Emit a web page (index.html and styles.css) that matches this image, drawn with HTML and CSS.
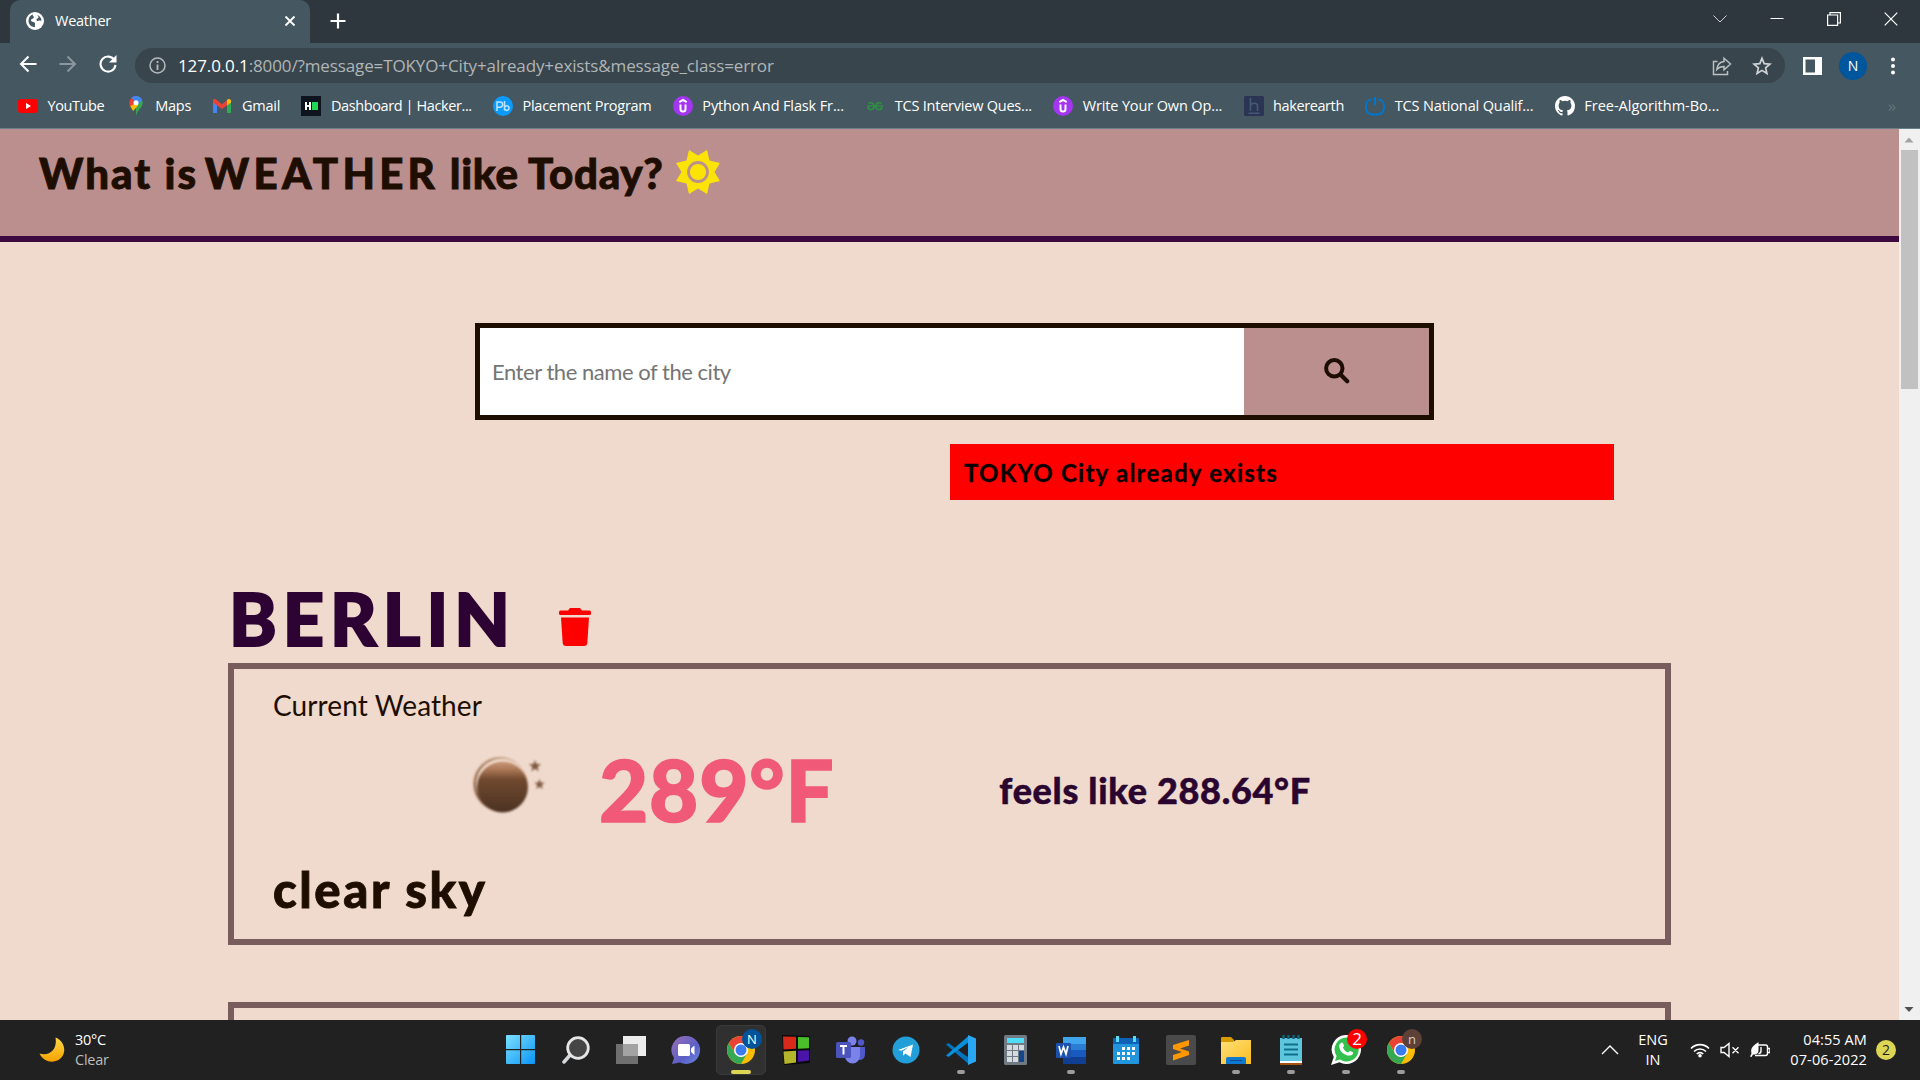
FILE: index.html
```html
<!DOCTYPE html>
<html lang="en">
<head>
<meta charset="utf-8">
<title>Weather</title>
<link rel="stylesheet" href="styles.css">
</head>
<body>
<svg width="0" height="0" class="defs">
  <defs>
    <linearGradient id="night" x1="0" y1="0" x2="0" y2="1"><stop offset="0" stop-color="#c9987a"/><stop offset=".14" stop-color="#b07c5a"/><stop offset=".35" stop-color="#70492f"/><stop offset="1" stop-color="#4c3222"/></linearGradient>
    <linearGradient id="win" x1="0" y1="0" x2="1" y2="1"><stop offset="0" stop-color="#7ce0ff"/><stop offset="1" stop-color="#0a95f5"/></linearGradient>
    <linearGradient id="chat" x1="0" y1="0" x2="1" y2="1"><stop offset="0" stop-color="#9a6fb5"/><stop offset=".6" stop-color="#5b5fc7"/><stop offset="1" stop-color="#6b8bdf"/></linearGradient>
    <linearGradient id="folder" x1="0" y1="0" x2="1" y2="1"><stop offset="0" stop-color="#ffe07a"/><stop offset="1" stop-color="#f9bd1f"/></linearGradient>
    <linearGradient id="moon" x1="0" y1="0" x2="0" y2="1"><stop offset="0" stop-color="#ffd84a"/><stop offset="1" stop-color="#f6a200"/></linearGradient>
    <symbol id="chrome" viewBox="0 0 28 28">
      <circle cx="14" cy="14" r="14" fill="#fbbc04"/>
      <path d="M14 7h12.100A14 14 0 0 0 1.900 7L8 17z" fill="#ea4335"/>
      <path d="M1.900 7 8 17.500 14 21l6-3.500L14 28A14 14 0 0 1 1.900 7z" fill="#34a853"/>
      <circle cx="14" cy="14" r="7" fill="#fff"/><circle cx="14" cy="14" r="5.500" fill="#3a7cf0"/>
    </symbol>
    <symbol id="udemy" viewBox="0 0 20 20"><circle cx="10" cy="10" r="10" fill="#a435f0"/><path d="M6.300 6.200 10 4l3.700 2.200M7.500 8.500v4.500a2.500 2.500 0 0 0 5 0V8.500" fill="none" stroke="#fff" stroke-width="2"/></symbol>
  </defs>
</svg>

<div class="tabs">
  <div class="tab">
    <svg width="18" height="18" viewBox="0 0 18 18"><circle cx="9" cy="9" r="9" fill="#fff"/><path d="M7 2.200c-1 1.500 1.200 1.800.8 3.300S4.500 6.700 5 8.500s3 1 3.800 2.300-.4 2.500.2 4.200c-4 0-6.500-3-6.500-6.300C2.500 5.500 4.500 3 7 2.200zM11.500 3c2.300 1 3.800 3 4 5.500-1 .8-2-.4-3 .3s-2-.3-2-1.400 2-1 2-2.200-1-1-1-2.200z" fill="#455760"/></svg>
    <span class="tab-title">Weather</span>
    <svg width="12" height="12" viewBox="0 0 12 12" class="tab-close"><path d="M1.500 1.500l9 9M10.500 1.500l-9 9" stroke="#fff" stroke-width="1.800"/></svg>
  </div>
  <svg class="new-tab" width="16" height="16" viewBox="0 0 16 16"><path d="M8 .5v15M.5 8h15" stroke="#fff" stroke-width="2.200"/></svg>
  <div class="window-buttons">
    <svg width="14" height="14" viewBox="0 0 14 14"><path d="M.5 3.500 7 10l6.500-6.500" fill="none" stroke="#cdd1d3"/></svg>
    <svg width="14" height="14" viewBox="0 0 14 14"><path d="M.5 6.500h13" stroke="#fff"/></svg>
    <svg width="14" height="14" viewBox="0 0 14 14"><path d="M.6 3h10v10.400H.6zM3 3V.6h10.400v10.400H11" fill="none" stroke="#fff" stroke-width="1.200"/></svg>
    <svg width="14" height="14" viewBox="0 0 14 14"><path d="M.7.7l12.600 12.600M13.300.7.7 13.300" stroke="#fff" stroke-width="1.200"/></svg>
  </div>
</div>

<div class="toolbar">
  <div class="nav">
    <svg width="18" height="18" viewBox="0 0 18 18"><path d="M17.500 9H2M9.500 1.500 2 9l7.500 7.500" fill="none" stroke="#fff" stroke-width="2"/></svg>
    <svg width="18" height="18" viewBox="0 0 18 18"><path d="M.5 9H16M8.500 1.500 16 9l-7.500 7.500" fill="none" stroke="#8b979d" stroke-width="2"/></svg>
    <svg width="18" height="18" viewBox="0 0 18 18"><path d="M15.500 5.200A7.500 7.500 0 1 0 16.500 10" fill="none" stroke="#fff" stroke-width="2.100"/><path d="M17.500 0v7.500H10z" fill="#fff"/></svg>
  </div>
  <div class="address">
    <svg width="17" height="17" viewBox="0 0 17 17"><circle cx="8.500" cy="8.500" r="7.500" fill="none" stroke="#b4babd" stroke-width="1.500"/><path d="M8.500 7.500V13M8.500 4v2" stroke="#b4babd" stroke-width="1.800"/></svg>
    <span class="url"><b>127.0.0.1</b>:8000/?message=TOKYO+City+already+exists&amp;message_class=error</span>
    <svg width="20" height="20" viewBox="0 0 20 20" class="share"><path d="M5.500 5.500h-4v13h14v-3.500" fill="none" stroke="#b9bfc2" stroke-width="1.500"/><path d="M12 2.200 18.500 8 12 13.800v-3.300c-3.500 0-5.500 1-7.200 3C5.300 9 8 6 12 5.500z" fill="none" stroke="#b9bfc2" stroke-width="1.500"/></svg>
    <svg width="20" height="20" viewBox="0 0 20 20"><path d="M10 2.300l2.200 5.300 5.700.5-4.300 3.700 1.300 5.600-4.900-3-4.900 3 1.300-5.600L2.100 8.100l5.700-.5z" fill="none" stroke="#d0d4d6" stroke-width="1.700"/></svg>
  </div>
  <svg width="19" height="18" viewBox="0 0 19 18" class="panel"><path d="M0 0h19v18H0zM2.500 2.500v13H12v-13z" fill="#fff" fill-rule="evenodd"/></svg>
  <span class="avatar">N</span>
  <svg width="6" height="18" viewBox="0 0 6 18"><circle cx="3" cy="2.500" r="2" fill="#fff"/><circle cx="3" cy="9" r="2" fill="#fff"/><circle cx="3" cy="15.500" r="2" fill="#fff"/></svg>
</div>

<div class="bookmarks">
  <a><svg width="20" height="20" viewBox="0 0 20 20"><rect y="3" width="20" height="14" rx="3" fill="#f00"/><path d="M8 7l5 3-5 3z" fill="#fff"/></svg>YouTube</a>
  <a><svg width="20" height="20" viewBox="0 0 20 20"><path d="M10 0a6.700 6.700 0 0 1 6.700 6.700c0 5-5.500 7-6.700 13.300z" fill="#34a853"/><path d="M10 0a6.700 6.700 0 0 0-6.700 6.700c0 2 1 3.700 2.300 5.300L10 6.700z" fill="#ea4335"/><path d="M4.300 10l5.700-3 2.500 2L7.200 15C6 13 5 12 4.300 10z" fill="#fbbc04"/><path d="M5.500 1.800A6.700 6.700 0 0 1 16.200 4L12 8.500 8 4.500z" fill="#4285f4"/><circle cx="10" cy="6.700" r="2.500" fill="#fff"/></svg>Maps</a>
  <a><svg width="20" height="20" viewBox="0 0 20 20"><path d="M1 5v12h4V8z" fill="#4285f4"/><path d="M19 5v12h-4V8z" fill="#34a853"/><path d="M1 4.500C1 3 3 2.500 4 3.500l6 4.800 6-4.800V8.500L10 13 1 6.500z" fill="#ea4335"/><path d="M15 4l1-.7c1.200-.8 3 0 3 1.700v1.500l-4 3z" fill="#fbbc04"/></svg>Gmail</a>
  <a><svg width="20" height="20" viewBox="0 0 20 20"><path d="M0 0h20v20H0z" fill="#0e141e"/><path d="M4 6h2v3h2V6h2v8H8v-3H6v3H4z" fill="#fff"/><path d="M11 6h6v8h-6z" fill="#1fd655"/></svg>Dashboard | Hacker...</a>
  <a><svg width="20" height="20" viewBox="0 0 20 20"><circle cx="10" cy="10" r="10" fill="#0b9bff"/><path d="M4 15V6h3a2.300 2.300 0 0 1 0 5.200H4M11.500 5v9.500M11.500 12a2.300 2.300 0 1 1 0 .1" fill="none" stroke="#bfe5ff" stroke-width="1.500"/></svg>Placement Program</a>
  <a><svg width="20" height="20"><use href="#udemy"/></svg>Python And Flask Fr...</a>
  <a><svg width="20" height="20" viewBox="0 0 20 20"><path d="M2 10h16M3.500 7.500c3-2 5.500 0 5.500 2.500a3 3 0 0 1-6 1M16.500 7.500c-3-2-5.500 0-5.500 2.500a3 3 0 0 0 6 1" fill="none" stroke="#2f8d46" stroke-width="1.700"/></svg>TCS Interview Ques...</a>
  <a><svg width="20" height="20"><use href="#udemy"/></svg>Write Your Own Op...</a>
  <a><svg width="20" height="20" viewBox="0 0 20 20"><rect width="20" height="20" rx="1.500" fill="#2c3454"/><path d="M6.500 2v13M6.500 9.500c1-3 7-3 7 .5v5M4.500 17.200h11" fill="none" stroke="#455978" stroke-width="1.600"/></svg>hakerearth</a>
  <a><svg width="20" height="20" viewBox="0 0 20 20"><path d="M6.500 3.500C2.500 4 1 5.500 1 10.500c0 6 2 8 9 8s9-2 9-8c0-5-1.500-6.500-5.500-7" fill="none" stroke="#0076ce" stroke-width="2"/><path d="M10 1v8" stroke="#0076ce" stroke-width="2.200"/></svg>TCS National Qualif...</a>
  <a><svg width="20" height="20" viewBox="0 0 16 16"><path fill="#fff" d="M8 0C3.580 0 0 3.580 0 8c0 3.540 2.290 6.530 5.470 7.590.4.070.55-.17.55-.38 0-.19-.01-.82-.01-1.490-2.010.37-2.530-.49-2.690-.94-.09-.23-.48-.94-.82-1.130-.28-.15-.68-.52-.01-.53.63-.01 1.080.58 1.230.82.72 1.210 1.870.87 2.330.66.070-.52.28-.87.51-1.070-1.780-.2-3.640-.89-3.640-3.950 0-.87.31-1.590.82-2.150-.08-.2-.36-1.020.08-2.120 0 0 .67-.21 2.200.82a7.600 7.600 0 0 1 4 0c1.530-1.040 2.200-.82 2.200-.82.44 1.100.16 1.920.08 2.120.51.56.82 1.270.82 2.150 0 3.070-1.870 3.750-3.650 3.950.29.25.54.73.54 1.480 0 1.070-.01 1.930-.01 2.200 0 .21.15.46.55.38A8 8 0 0 0 16 8c0-4.420-3.580-8-8-8z"/></svg>Free-Algorithm-Bo...</a>
  <span class="more">»</span>
</div>

<div class="viewport">
  <main class="page">
    <header class="banner">
      <h1><span class="lead">What is</span> <span class="loud">WEATHER</span> like Today?</h1>
      <svg width="44" height="44" viewBox="0 0 44 44"><path d="M13 0l9 5.500L31 0l2.500 10.500L44 13l-5.500 9L44 31l-10.500 2.500L31 44l-9-5.500L13 44l-2.500-10.500L0 31l5.500-9L0 13l10.500-2.500z" fill="#fbe307"/><circle cx="22" cy="22" r="9.500" fill="#fbe307" stroke="#bc8f8f" stroke-width="2.800"/></svg>
    </header>
    <form class="search">
      <span class="field">Enter the name of the city</span>
      <span class="go"><svg width="26" height="26" viewBox="0 0 26 26"><circle cx="10.300" cy="10.300" r="8.200" fill="none" stroke="#1e0e02" stroke-width="4"/><path d="M16.500 16.500l6.700 6.700" stroke="#1e0e02" stroke-width="4.200" stroke-linecap="round"/></svg></span>
    </form>
    <p class="alert">TOKYO City already exists</p>
    <div class="city">
      <h2>BERLIN</h2>
      <svg width="32" height="38" viewBox="0 0 32 38"><path d="M1.500 2.500H9L11 0h10l2 2.500h7.500q1.500 0 1.500 1.500v1.700q0 1.300-1.500 1.300h-29Q0 7 0 5.700V4q0-1.500 1.500-1.500zM2 9.500h28L28.300 35q-.2 3-3.300 3H7q-3.100 0-3.300-3z" fill="#f00"/></svg>
    </div>
    <section class="card">
      <p class="label">Current Weather</p>
      <div class="reading">
        <svg class="sky" width="76" height="58" viewBox="0 0 76 58"><circle cx="28" cy="28" r="27" fill="#cfa284"/><circle cx="28.500" cy="28.500" r="26.500" fill="#8a6248"/><circle cx="29.500" cy="28" r="25.500" fill="#f3dfd0"/><circle cx="30.500" cy="31" r="25.500" fill="url(#night)"/><path d="M63 4l1.500 4 4.500.2-3.500 2.800 1.300 4.300-3.800-2.500-3.800 2.500 1.300-4.300L57 8.200l4.500-.2zM67.500 23l1.300 3.500 4 .2-3.100 2.400 1.100 3.900-3.300-2.200-3.300 2.200 1.100-3.900-3.100-2.400 4-.2z" fill="#805941"/></svg>
        <strong class="temp">289°F</strong>
        <span class="feels">feels like 288.64°F</span>
      </div>
      <p class="summary">clear sky</p>
    </section>
    <section class="card next"></section>
  </main>
  <div class="scrollbar">
    <svg width="21" height="21" viewBox="0 0 21 21"><path d="M5.500 13.500h9L10 8.500z" fill="#a3a3a3"/></svg>
    <i class="thumb"></i>
    <svg width="21" height="21" viewBox="0 0 21 21"><path d="M5.500 8h9L10 13z" fill="#505050"/></svg>
  </div>
</div>

<footer class="taskbar">
  <div class="weather">
    <svg width="26" height="26" viewBox="0 0 26 26"><path d="M16.500.5C23 3 27 10 24.500 17 21 26.500 6 28 .5 16.500c11 3 18-5 16-16z" fill="url(#moon)"/></svg>
    <div><span>30°C</span><em>Clear</em></div>
  </div>
  <div class="apps">
    <span><svg width="30" height="30" viewBox="0 0 30 30"><path d="M0 1q0-1 1-1h13v14H0zM15.200 0H28q1 0 1 1v13H15.200zM0 15.200h14V29H1q-1 0-1-1zM15.200 15.200H29V28q0 1-1 1H15.200z" fill="url(#win)"/></svg></span>
    <span><svg width="28" height="28" viewBox="0 0 28 28"><path d="M9 18l-7 8" stroke="#d5d8da" stroke-width="3.500" stroke-linecap="round"/><circle cx="16" cy="12" r="10.300" fill="#454545" stroke="#e4e6e7" stroke-width="2.800"/></svg></span>
    <span><svg width="30" height="28" viewBox="0 0 30 28"><path d="M7 0h23v20H7z" fill="#ececec"/><path d="M0 8h22v20H0z" fill="#6f6f6f"/><path d="M7 8h15v12H7z" fill="#a3a3a3"/></svg></span>
    <span><svg width="30" height="28" viewBox="0 0 30 28"><path d="M15 0a14 14 0 1 1-6 26.600L1 28l2-6A14 14 0 0 1 15 0z" fill="url(#chat)"/><rect x="7" y="8" width="12" height="12" rx="1.500" fill="#fff"/><path d="M20 12.500l3.500-3v9.500L20 16z" fill="#fff"/></svg></span>
    <span class="active"><svg width="28" height="28"><use href="#chrome"/></svg><b class="badge blue">N</b></span>
    <span><svg width="28" height="30" viewBox="0 0 28 30"><path d="M0 0l28 1v27L2 30z" fill="#0a0a0a"/><path d="M1 1.500l13 .3v12L1.500 14.500z" fill="#d8291a"/><path d="M16 2l11 .3v11L16 13.800z" fill="#4abf2b"/><path d="M1.500 16.500l12.500-.7v11.700L2.500 29z" fill="#b5b62c"/><path d="M16 15.700l11-.4v10.200L16 27z" fill="#4b14a8"/></svg></span>
    <span><svg width="30" height="28" viewBox="0 0 30 28"><circle cx="16" cy="5" r="4.500" fill="#7b83eb"/><circle cx="25" cy="6.500" r="3.200" fill="#5059c9"/><path d="M20 11h9v7q0 6-6 6z" fill="#5059c9"/><path d="M9 11h15v9a7.500 7.500 0 0 1-15 0z" fill="#7b83eb"/><rect y="6" width="15" height="16" rx="1.500" fill="#4b53bc"/><path d="M4 10h7M7.500 10v8.500" stroke="#fff" stroke-width="2"/></svg></span>
    <span><svg width="28" height="28" viewBox="0 0 28 28"><circle cx="14" cy="14" r="13.500" fill="#229ed9"/><path d="M6 14 21 8.500l-2.500 12.500-5-3.500-2.500 2.300v-4.300l5.500-4.500-7 3.800z" fill="#fff"/></svg></span>
    <span class="run"><svg width="30" height="30" viewBox="0 0 30 30"><path d="M0 9.500 2.500 8 23 23v6.500z" fill="#0074bd"/><path d="M0 20.500 2.500 22 23 7V.5z" fill="#0a8fdb"/><path d="M22 0l8 3.500v23L22 30z" fill="#2aa7f2"/></svg></span>
    <span><svg width="23" height="30" viewBox="0 0 23 30"><rect width="23" height="30" rx="1.500" fill="#717a83"/><path d="M3 3h17v5H3z" fill="#4fdcf7"/><path d="M3 10h5v5H3zM9 10h5v5H9zM15 10h5v5h-5zM3 16h5v5H3zM9 16h5v5H9zM3 22h5v5H3zM9 22h5v5H9z" fill="#d3dae0"/><path d="M15 16h5v11h-5z" fill="#10468c"/></svg></span>
    <span class="run"><svg width="30" height="28" viewBox="0 0 30 28"><path d="M7 1h23v7H7z" fill="#41a5ee"/><path d="M7 8h23v6H7z" fill="#2b7cd3"/><path d="M7 14h23v7H7z" fill="#185abd"/><path d="M7 21h23v7H7z" fill="#103f91"/><rect y="7" width="15" height="15" rx="1" fill="#1c52ad"/><path d="M3 10l2 8 2.500-7L10 18l2-8" fill="none" stroke="#fff" stroke-width="1.700"/></svg></span>
    <span><svg width="26" height="28" viewBox="0 0 26 28"><path d="M0 2h26v6H0z" fill="#0f62b5"/><path d="M0 8h26v19q0 1-1 1H1q-1 0-1-1z" fill="#2196de"/><path d="M3 0h3v6H3zM20 0h3v6h-3z" fill="#5adcf5"/><path d="M9 11h3v3H9zM14 11h3v3h-3zM19 11h3v3h-3zM4 16h3v3H4zM9 16h3v3H9zM14 16h3v3h-3zM19 16h3v3h-3zM4 21h3v3H4zM9 21h3v3H9zM14 21h3v3h-3z" fill="#fff"/></svg></span>
    <span><svg width="30" height="30" viewBox="0 0 30 30"><rect width="30" height="30" rx="2" fill="#4a4a4a"/><path d="M7 10l16-5v5.500l-9 3 9 3V20L7 25.500V20l9-3-9-3z" fill="#ff9800"/></svg></span>
    <span class="run"><svg width="30" height="28" viewBox="0 0 30 28"><path d="M0 2q0-1 1-1h9l3 3v5H0z" fill="#d99b00"/><path d="M0 6h12l3-2h15v24H0z" fill="url(#folder)"/><path d="M5 28v-5q0-2 2-2h16q2 0 2 2v5z" fill="#0f79d0"/><path d="M9 24.500h12" stroke="#0a4f96"/></svg></span>
    <span class="run"><svg width="24" height="30" viewBox="0 0 24 30"><path d="M1 3h22v23H1z" fill="#5dc6dc"/><path d="M1 26h22v2H1z" fill="#fff"/><path d="M1 28h22v2H1z" fill="#a35312"/><path d="M4.500 0v4M9.500 0v4M14.500 0v4M19.500 0v4" stroke="#0d6178" stroke-width="2.500"/><path d="M5 9.500h14M5 14.500h14M5 19.500h14" stroke="#0f6f8c" stroke-width="1.800"/></svg></span>
    <span class="run"><svg width="30" height="30" viewBox="0 0 30 30"><path d="M15.500 0a14.500 14.500 0 1 1-7 27.200L0 30l2.800-8A14.500 14.500 0 0 1 15.500 0z" fill="#fff"/><path d="M15.500 2.500a12 12 0 1 1-6.500 22l-5 1.500 1.600-5A12 12 0 0 1 15.500 2.500z" fill="#32c14c"/><path d="M10 8c1.500-1 2 0 3 2.500.3 1-1.200 1.500-1 2.200 1 2.300 2.800 4 5 4.800.8 0 1.300-2 2.300-1.500 2.500 1 3.500 1.500 2.500 3-3 4-14 0-13.500-8.500 0-1 .8-2 1.700-2.500z" fill="#fff"/></svg><b class="badge red">2</b></span>
    <span class="run"><svg width="28" height="28"><use href="#chrome"/></svg><b class="badge brown">n</b></span>
  </div>
  <div class="tray">
    <svg width="18" height="10" viewBox="0 0 18 10"><path d="M1 9l8-8 8 8" fill="none" stroke="#fff" stroke-width="1.400"/></svg>
    <div class="lang"><span>ENG</span><span>IN</span></div>
    <svg class="wifi" width="20" height="16" viewBox="0 0 20 16"><path d="M1 6.500a12.500 12.500 0 0 1 18 0M4 9.500a8.500 8.500 0 0 1 12 0M6.800 12a4.500 4.500 0 0 1 6.400 0" fill="none" stroke="#fff" stroke-width="1.600"/><circle cx="10" cy="13.800" r="1.800" fill="#fff"/></svg>
    <svg class="vol" width="20" height="16" viewBox="0 0 20 16"><path d="M1 5.500h3L9 1.500v13l-5-4H1zM12.500 5.200l6 6M18.500 5.200l-6 6" fill="none" stroke="#fff" stroke-width="1.400"/></svg>
    <svg class="bat" width="20" height="16" viewBox="0 0 20 16"><path d="M7 3h8.500q2 0 2 2v6.500q0 2-2 2H5M18 6.500h2v4h-2M11 5v4q0 2.500-2.500 2.500" fill="none" stroke="#fff" stroke-width="1.400"/><path d="M8.500 0v8c0 4-3 5-5.500 4.500L1.500 15 0 14.500l1.500-3C0 5 4 3.500 8.500 0z" fill="#fff"/></svg>
    <div class="clock"><span>04:55 AM</span><span>07-06-2022</span></div>
    <b class="count">2</b>
  </div>
</footer>
</body>
</html>
```
FILE: styles.css
```css
* { box-sizing: border-box; margin: 0; padding: 0; }
body {
  width: 1920px;
  height: 1080px;
  overflow: hidden;
  display: flex;
  flex-direction: column;
  font-family: "Open Sans", "Noto Sans", sans-serif;
  background: #212121;
  color: #fff;
}
svg { display: block; flex: none; }
.defs { position: absolute; }

/* Browser window */
.tabs {
  height: 43px;
  flex: none;
  display: flex;
  background: #2d373d;
  padding-left: 10px;
}
.tab {
  width: 300px;
  display: flex;
  align-items: center;
  padding: 0 14px 2px 16px;
  gap: 11px;
  background: #455760;
  border-radius: 10px 10px 0 0;
}
.tab-title { font-size: 14.5px; letter-spacing: -.25px; }
.tab-close { margin-left: auto; }
.new-tab { margin: 13px 0 0 19.5px; }
.window-buttons { margin-left: auto; display: flex; gap: 43px; padding: 12px 22px 0 0; }

.toolbar {
  height: 45px;
  flex: none;
  display: flex;
  align-items: center;
  background: #455760;
  padding: 0 24px 0 19px;
}
.nav { display: flex; gap: 22px; width: 116px; padding-bottom: 3px; }
.address {
  width: 1650px;
  height: 35px;
  display: flex;
  align-items: center;
  border-radius: 18px;
  background: #39454c;
  padding: 0 13px 0 14px;
}
.url { margin-left: 12px; font-size: 17px; letter-spacing: -.12px; color: #b0b5b8; white-space: nowrap; }
.url b { font-weight: 400; color: #fff; }
.share { margin: 0 20px 0 auto; }
.panel { margin-left: 18px; }
.avatar {
  width: 28px;
  height: 28px;
  border-radius: 50%;
  margin: 0 23px 0 17px;
  background: #00569c;
  text-align: center;
  font-size: 14px;
  line-height: 28px;
}

.bookmarks {
  height: 41px;
  flex: none;
  display: flex;
  align-items: center;
  gap: 21.3px;
  background: #455760;
  border-bottom: 1px solid #6b7f88;
  padding: 0 24px 5px 18px;
  font-size: 14.5px;
  letter-spacing: -.22px;
  white-space: nowrap;
}
.bookmarks a { display: flex; align-items: center; gap: 9.5px; }
.bookmarks a:nth-child(1), .bookmarks a:nth-child(4), .bookmarks a:nth-child(9) { letter-spacing: -.4px; }
.bookmarks a:nth-child(5) { letter-spacing: -.27px; }
.bookmarks a:nth-child(6), .bookmarks a:nth-child(8), .bookmarks a:nth-child(10) { letter-spacing: -.13px; }
.bookmarks a:nth-child(11) { letter-spacing: 0; }
.more { margin-left: auto; color: #66727a; font-size: 17px; line-height: 20px; }

/* Weather page */
.viewport { height: 891px; flex: none; display: flex; overflow: hidden; }
.page {
  width: 1899px;
  flex: none;
  background: #efdacd;
  color: #1e0e02;
  font-family: Lato, "Open Sans", sans-serif;
  white-space: nowrap;
}
.banner {
  height: 113px;
  display: flex;
  gap: 12px;
  padding: 17px 39px 0;
  background: #bc8f8f;
  border-bottom: 6px solid #3d0a3f;
}
.banner h1 {
  margin-top: 1px;
  font-size: 42px;
  line-height: 53px;
  font-weight: 900;
  letter-spacing: .7px;
  -webkit-text-stroke: .9px currentColor;
}
.lead { letter-spacing: 2.1px; }
.loud { margin-left: -4px; letter-spacing: 4.3px; }
.banner svg { margin-top: 4px; }
.search {
  width: 959px;
  height: 97px;
  display: flex;
  margin: 81px 0 0 475px;
  border: 5px solid #1e0e02;
  background: #fff;
}
.field { flex: 1; display: flex; align-items: center; padding-left: 12px; font-size: 22px; letter-spacing: -.46px; color: #757575; }
.go { width: 185px; display: grid; place-items: center; padding-bottom: 2px; background: #bc8f8f; }
.alert {
  width: 664px;
  height: 56px;
  margin: 24px 0 0 950px;
  padding-left: 14px;
  background: #f00;
  color: #0a0000;
  font-size: 24px;
  letter-spacing: 1.25px;
  line-height: 57px;
  font-weight: 700;
  -webkit-text-stroke: .3px currentColor;
}
.city { display: flex; align-items: flex-end; gap: 43px; margin: 78px 0 0 228px; padding-left: 1px; }
.city h2 {
  font-size: 72px;
  line-height: 80px;
  font-weight: 900;
  letter-spacing: 6px;
  color: #2d0333;
  -webkit-text-stroke: 2px currentColor;
}
.city svg { margin-bottom: 12px; }
.card {
  width: 1443px;
  height: 282px;
  margin: 5px 0 0 228px;
  padding: 16px 39px 0;
  border: 6px solid #795c5c;
}
.card.next { margin-top: 57px; }
.label { font-size: 28px; line-height: 40px; letter-spacing: .1px; }
.reading { height: 80px; display: flex; align-items: center; margin-top: 24px; padding-left: 199px; }
.sky { margin-top: -8px; filter: blur(.8px); }
.temp { margin-left: 51px; font-size: 85px; font-weight: 900; letter-spacing: .8px; color: #f05a78; -webkit-text-stroke: 1.5px currentColor; }
.feels { margin: 2px 0 0 165px; font-size: 36px; font-weight: 900; letter-spacing: .7px; color: #2a0530; -webkit-text-stroke: .5px currentColor; }
.summary { margin-top: 30px; font-size: 49px; line-height: 60px; font-weight: 900; letter-spacing: 2.6px; -webkit-text-stroke: .9px currentColor; }

.scrollbar { width: 21px; display: flex; flex-direction: column; background: #f0f0f0; }
.thumb { height: 239px; margin: 0 2px auto; background: #c1c1c1; }

/* Taskbar */
.taskbar { height: 60px; flex: none; display: flex; background: #212121; }
.weather { width: 493px; display: flex; align-items: center; gap: 10px; padding: 0 0 0 39px; font-size: 14.5px; letter-spacing: -.25px; line-height: 20px; }
.weather span, .weather em { display: block; }
.weather em { font-style: normal; color: #bdbdbd; }
.apps { display: flex; }
.apps > span { position: relative; width: 55px; height: 60px; display: grid; place-items: center; }
.apps .active::before {
  content: "";
  position: absolute;
  inset: 5px 2px 5px 3px;
  border-radius: 5px;
  background: #303030;
  border: 1px solid #3a3a3a;
}
.apps .active svg { position: relative; }
.apps .active::after, .run::after {
  content: "";
  position: absolute;
  left: 24px;
  bottom: 6px;
  width: 8px;
  height: 4px;
  border-radius: 2px;
  background: #9b9b9b;
}
.apps .active::after { left: 18px; width: 20px; background: #ddd655; }
.badge {
  position: absolute;
  top: 9px;
  right: 6px;
  width: 20px;
  height: 20px;
  border-radius: 50%;
  text-align: center;
  font-size: 13px;
  line-height: 20px;
  font-weight: 400;
}
.blue { background: #00539b; }
.red { background: #f00; font-size: 17px; }
.brown { background: #5d4037; color: #d7ccc8; }
.tray { flex: 1; display: flex; align-items: center; font-size: 14.5px; line-height: 20px; padding-left: 173px; }
.tray span { display: block; }
.lang { width: 30px; margin: 0 22px 0 19px; text-align: center; }
.vol { margin: 0 10px; }
.clock { width: 97px; text-align: right; letter-spacing: .1px; }
.count {
  width: 20px;
  height: 20px;
  margin-left: 9px;
  border-radius: 50%;
  background: #ddd655;
  color: #222;
  font-size: 14px;
  font-weight: 400;
  text-align: center;
}
```
